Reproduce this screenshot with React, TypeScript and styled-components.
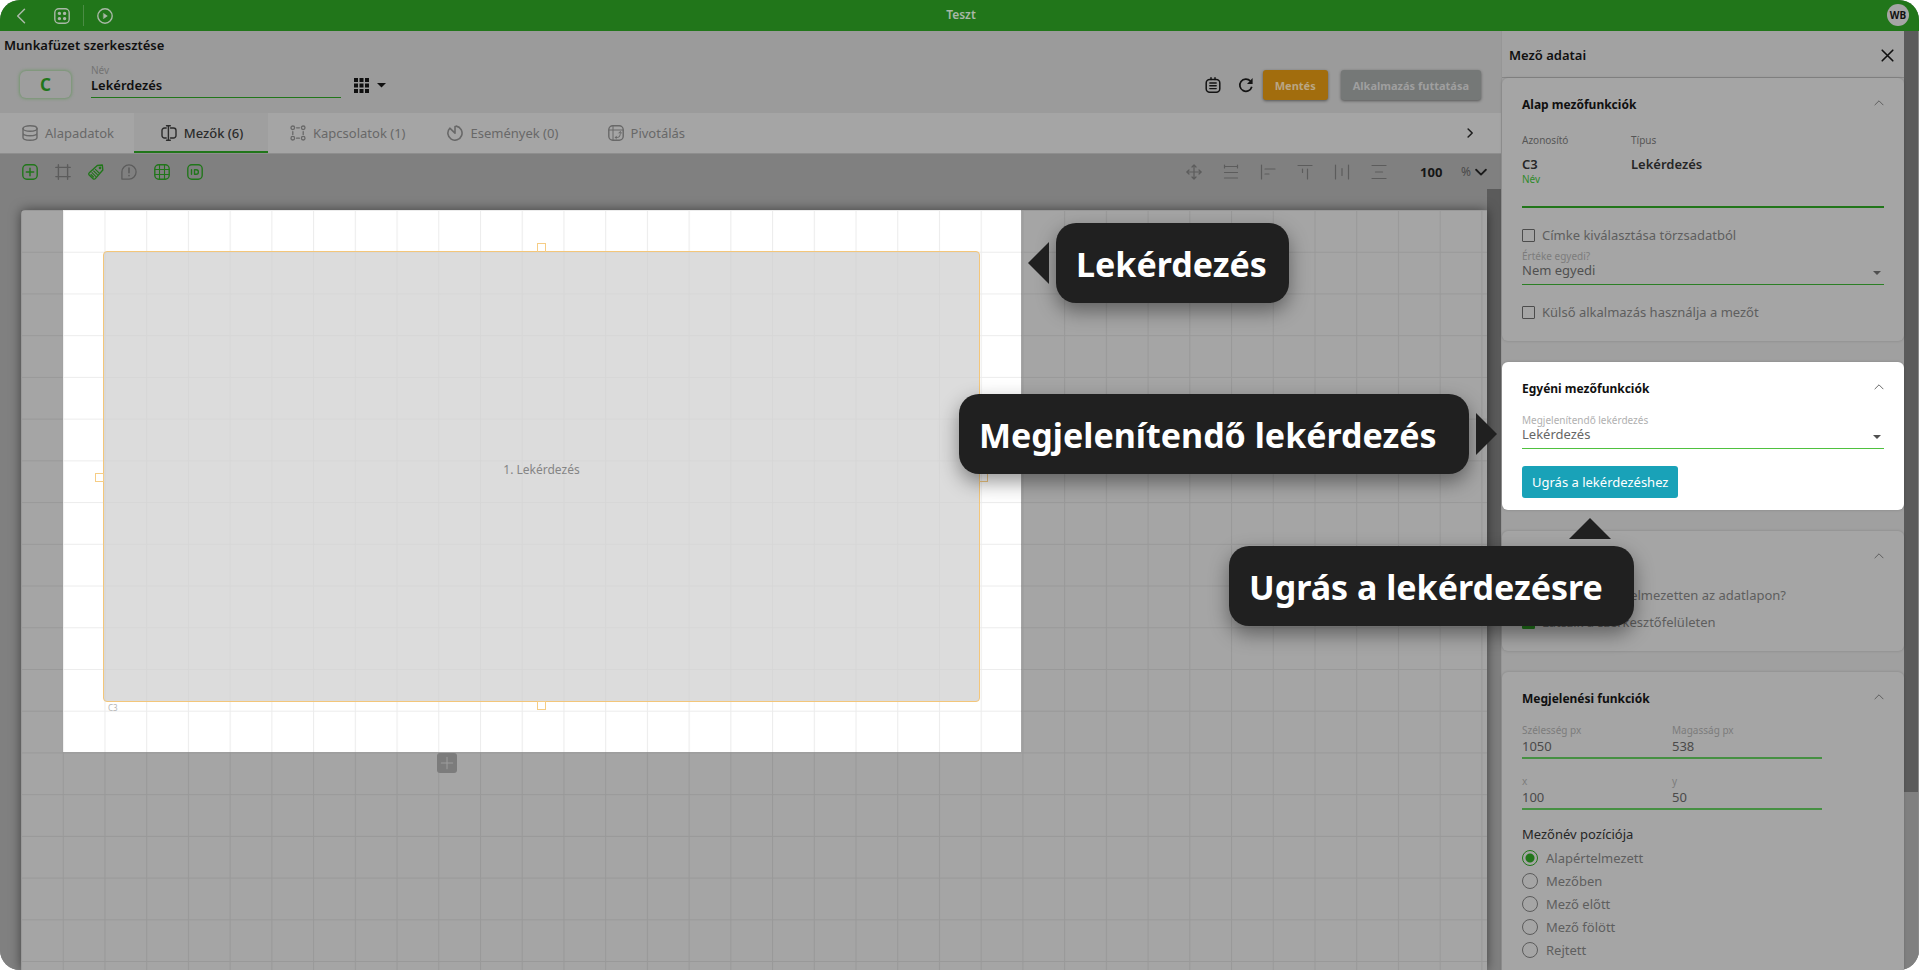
import React from "react";
import styled, { createGlobalStyle, css } from "styled-components";

const c = {
  green: "#21761a",
  greenSoft: "#469043",
  ink: "#101010",
  muted: "#737373",
  head: "#9b9b9b",
  panel: "#a0a0a0",
  card: "#a5a5a5",
  track: "#808080",
  thumb: "#5b5b5b",
  tip: "#202020",
};

const Global = createGlobalStyle`
  *, *::before, *::after { box-sizing: border-box; }
  body { margin: 0; background: #fff; }
  body, button, input, select { font-family: "Noto Sans", "Open Sans", sans-serif; }
  button { border: 0; padding: 0; background: none; cursor: pointer; color: inherit; }
  h1, h2, h3, p, fieldset { margin: 0; padding: 0; border: 0; font-weight: inherit; font-size: inherit; }
  svg { display: block; flex: none; }
`;

const Page = styled.div`
  display: flex;
  flex-direction: column;
  height: 100vh;
  overflow: hidden;
  border-radius: 20px;
  background: ${c.track};
`;

const TopBar = styled.header`
  display: grid;
  grid-template-columns: 1fr auto 1fr;
  align-items: center;
  flex: none;
  height: 31px;
  padding: 0 10px 0 13px;
  background: ${c.green};
  color: #a9b8a7;
`;
const TopLeft = styled.div`
  display: flex;
  align-items: center;
  gap: 25px;
`;
const TopGroup = styled.div`
  display: flex;
  align-items: center;
  gap: 13px;
`;
const Divider = styled.span`
  width: 1px;
  height: 21px;
  background: #4b8c45;
`;
const AppTitle = styled.h1`
  font-size: 12px;
  line-height: 28px;
  height: 30px;
  font-weight: 600;
`;
const Avatar = styled.button`
  justify-self: end;
  width: 22px;
  height: 22px;
  margin-bottom: 2px;
  border-radius: 50%;
  background: #a5a5a5;
  color: ${c.ink};
  font-size: 10px;
  font-weight: 700;
`;

const Body = styled.div`
  display: flex;
  flex: 1;
  min-height: 0;
`;
const Main = styled.main`
  display: flex;
  flex-direction: column;
  flex: 1;
  min-width: 0;
`;
const EditorHead = styled.section`
  background: ${c.head};
`;
const EditorTitle = styled.h2`
  padding-left: 4px;
  font-size: 13px;
  line-height: 28px;
  height: 26px;
  font-weight: 600;
  color: ${c.ink};
`;
const HeadRow = styled.div`
  display: flex;
  height: 56px;
  padding: 7px 20px 13px;
`;
const Badge = styled.div`
  align-self: flex-end;
  width: 51px;
  margin: 0 20px 2px 0;
  border-radius: 6px;
  box-shadow: 0 0 3px 1px #74966f;
  background: #9e9e9e;
  color: ${c.green};
  font-size: 17px;
  line-height: 27px;
  font-weight: 700;
  text-align: center;
`;
const NameField = styled.label`
  display: flex;
  flex-direction: column;
  width: 250px;
  font-size: 10px;
  line-height: 12px;
  color: ${c.muted};
`;
const NameInput = styled.input`
  width: 100%;
  height: 22px;
  padding: 0 0 4px;
  border: 0;
  border-bottom: 1px solid ${c.green};
  background: none;
  color: ${c.ink};
  font-size: 13px;
  font-weight: 600;
`;
const LayoutPicker = styled.button`
  display: flex;
  align-items: center;
  align-self: flex-end;
  gap: 8px;
  height: 30px;
  margin-left: 13px;
  color: ${c.ink};
`;
const Actions = styled.div`
  display: flex;
  align-items: center;
  align-self: flex-end;
  margin-left: auto;
  color: #141414;
`;
const IconButton = styled.button<{ $gap?: number }>`
  display: flex;
  margin-right: ${(p) => p.$gap ?? 0}px;
`;
const ActionButton = styled.button<{ $tone: "save" | "run" }>`
  height: 30px;
  padding: 0 12px;
  border-radius: 3px;
  box-shadow: 0 1px 3px rgba(0, 0, 0, 0.45);
  font-size: 11px;
  font-weight: 700;
  white-space: nowrap;
  ${(p) =>
    p.$tone === "save"
      ? css`
          margin-right: 13px;
          background: #a26d0d;
          color: #b9a685;
        `
      : css`
          background: #757877;
          color: #9f9f9f;
        `}
`;

const Tabs = styled.nav`
  display: flex;
  align-items: stretch;
  flex: none;
  height: 41px;
  background: ${c.card};
  border-bottom: 1px solid #8e8e8e;
`;
const Tab = styled.button<{ $active?: boolean }>`
  display: flex;
  align-items: center;
  justify-content: center;
  gap: 7px;
  min-width: 134px;
  padding: 0 20px 0 22px;
  font-size: 13px;
  color: ${(p) => (p.$active ? "#2b2b2b" : "#686868")};
  font-weight: ${(p) => (p.$active ? 500 : 400)};
  background: ${(p) => (p.$active ? "#9f9f9f" : "none")};
  box-shadow: ${(p) => (p.$active ? `inset 0 -2px ${c.green}` : "none")};
`;
const TabsNext = styled.button`
  margin-left: auto;
  padding: 0 26px;
  color: #1d1d1d;
`;

const Toolbar = styled.div`
  display: flex;
  align-items: center;
  flex: none;
  height: 35px;
  padding: 0 14px 0 22px;
  background: ${c.track};
`;
const Tools = styled.div<{ $end?: boolean }>`
  display: flex;
  align-items: center;
  gap: ${(p) => (p.$end ? 21 : 17)}px;
  margin-left: ${(p) => (p.$end ? "auto" : 0)};
  color: #585858;
`;
const Tool = styled.button<{ $on?: boolean }>`
  display: flex;
  color: ${(p) => (p.$on ? c.green : "#5c5c5c")};
`;
const ZoomBox = styled.label`
  display: flex;
  align-items: center;
  margin-left: 33px;
  font-size: 12px;
  color: #4a4a4a;
`;
const ZoomInput = styled.input`
  width: 41px;
  padding: 0;
  border: 0;
  background: none;
  color: #161616;
  font-size: 13px;
  font-weight: 700;
`;
const ZoomChevron = styled.button`
  display: flex;
  margin-left: 4px;
  color: #1a1a1a;
`;

const Workspace = styled.div`
  display: flex;
  flex: 1;
  min-height: 0;
`;
const Viewport = styled.div`
  flex: 1;
  min-width: 0;
  padding: 21px 0 0 21px;
  background: ${c.track};
`;
const Sheet = styled.div`
  position: relative;
  height: 100%;
  border-radius: 4px 0 0 0;
  background: ${c.card};
  box-shadow: 0 0 12px rgba(0, 0, 0, 0.5);
`;
const Spotlight = styled.div`
  position: absolute;
  left: 42px;
  top: 0;
  width: 958px;
  height: 542px;
  background: #fff;
`;
const GridLines = styled.svg`
  position: absolute;
  inset: 0;
  width: 100%;
  height: 100%;
`;
const FieldBox = styled.div`
  position: absolute;
  left: 82px;
  top: 41px;
  width: 877px;
  height: 451px;
  display: flex;
  align-items: center;
  justify-content: center;
  padding-bottom: 14px;
  border: 1px solid #f3c67a;
  border-radius: 4px;
  background: rgba(205, 205, 205, 0.7);
  font-size: 12px;
  color: #858585;
`;
const Handle = styled.span<{ $side: "top" | "right" | "bottom" | "left" }>`
  position: absolute;
  width: 9px;
  height: 9px;
  border: 1px solid #f6cd85;
  ${(p) =>
    ({
      top: css`
        top: -9px;
        left: 50%;
        margin-left: -5px;
        border-bottom: 0;
      `,
      bottom: css`
        bottom: -9px;
        left: 50%;
        margin-left: -5px;
      `,
      left: css`
        left: -9px;
        top: 50%;
        margin-top: -4px;
      `,
      right: css`
        right: -9px;
        top: 50%;
        margin-top: -4px;
      `,
    })[p.$side]}
`;
const FieldId = styled.span`
  position: absolute;
  left: 4px;
  top: 451px;
  font-size: 8px;
  line-height: 10px;
  color: #b5b5b5;
`;
const AddRow = styled.button`
  position: absolute;
  left: 416px;
  top: 543px;
  width: 20px;
  height: 20px;
  display: flex;
  align-items: center;
  justify-content: center;
  border-radius: 3px;
  background: #7c7c7c;
  color: #9c9c9c;
`;
const ScrollTrack = styled.div<{ $edge?: boolean }>`
  flex: none;
  width: ${(p) => (p.$edge ? 15 : 14)}px;
  border-right: ${(p) => (p.$edge ? "1px solid #8a8a8a" : "0")};
  background: ${c.track};
`;
const ScrollThumb = styled.div<{ $h: number }>`
  height: ${(p) => p.$h}%;
  background: ${c.thumb};
`;

const Side = styled.aside`
  flex: none;
  width: 403px;
  background: ${c.panel};
  border-left: 1px solid #969696;
`;
const SideHead = styled.div`
  display: flex;
  align-items: center;
  justify-content: space-between;
  height: 47px;
  padding: 2px 10px 0 7px;
  border-bottom: 1px solid #888;
  background: #a2a2a2;
  color: ${c.ink};
  font-size: 13px;
  font-weight: 600;
`;
const Cards = styled.div`
  display: flex;
  flex-direction: column;
  gap: 21px;
`;
const Card = styled.section<{ $lit?: boolean; $bottom?: number }>`
  position: relative;
  padding: 0 20px ${(p) => p.$bottom ?? 19}px;
  border-radius: 6px;
  background: ${(p) => (p.$lit ? "#fff" : c.card)};
  box-shadow: 0 0 3px rgba(0, 0, 0, 0.18);
  --label: ${(p) => (p.$lit ? "#b0b0b0" : "#7c7c7c")};
`;
const CardHead = styled.div`
  display: flex;
  align-items: center;
  justify-content: space-between;
  height: 50px;
  padding: 3px 0 0;
  font-size: 12px;
  font-weight: 700;
  color: ${c.ink};
`;
const HeadChevron = styled.button`
  margin-left: auto;
  padding: 0 0 4px;
  color: #555;
`;
const Facts = styled.dl`
  display: grid;
  grid-template-columns: 109px 1fr;
  margin: 0;
  padding-top: 4px;
`;
const Fact = styled.div`
  dt {
    font-size: 10px;
    line-height: 16px;
    color: #565656;
  }
  dd {
    margin: 7px 0 0;
    font-size: 13px;
    line-height: 18px;
    font-weight: 600;
    color: #262626;
  }
`;
const Field = styled.label<{ $accent?: boolean }>`
  position: relative;
  display: block;
  font-size: 10px;
  line-height: ${(p) => (p.$accent ? 12 : 16)}px;
  color: ${(p) => (p.$accent ? "#2f8a2a" : "var(--label)")};
`;
const Input = styled.input<{ $accent?: boolean }>`
  display: block;
  width: 100%;
  height: ${(p) => (p.$accent ? 23 : 21)}px;
  padding: 0 0 3px;
  border: 0;
  border-bottom: ${(p) => (p.$accent ? `2px solid ${c.green}` : `2px solid ${c.greenSoft}`)};
  border-radius: 0;
  background: none;
  color: #4a4a4a;
  font-size: 13px;
`;
const Select = styled.select<{ $lit?: boolean }>`
  appearance: none;
  display: block;
  width: 100%;
  height: 25px;
  margin-top: -4px;
  padding: 0 20px 4px 0;
  border: 0;
  border-bottom: 1px solid ${(p) => (p.$lit ? "#4fc13f" : "#2b7f25")};
  border-radius: 0;
  background: none;
  color: ${(p) => (p.$lit ? "#666" : "#505050")};
  font-size: 13px;
`;
const SelectCaret = styled.span`
  position: absolute;
  right: 3px;
  bottom: 10px;
  border: 4px solid transparent;
  border-top-color: #505050;
  border-bottom: 0;
`;
const CheckRow = styled.label<{ $top: number; $bottom?: number }>`
  display: flex;
  align-items: center;
  gap: 7px;
  height: 20px;
  margin: ${(p) => p.$top}px 0 ${(p) => p.$bottom ?? 0}px;
  font-size: 13px;
  color: #5e5e5e;
`;
const Check = styled.input`
  appearance: none;
  width: 13px;
  height: 13px;
  margin: 0;
  border: 1px solid #4c4c4c;
  border-radius: 1px;
  &:checked {
    border-color: ${c.green};
    background: ${c.green};
  }
`;
const JumpButton = styled.button`
  height: 32px;
  margin-top: 17px;
  padding: 0 10px;
  border-radius: 3px;
  background: #19a2b8;
  color: #fff;
  font-size: 13px;
`;
const Pair = styled.div`
  display: grid;
  grid-template-columns: 150px 150px;
  margin-bottom: 14px;
`;
const Radios = styled.fieldset``;
const Legend = styled.legend`
  padding: 0;
  margin-bottom: 2px;
  font-size: 13px;
  line-height: 20px;
  color: #262626;
`;
const RadioRow = styled.label`
  display: flex;
  align-items: center;
  gap: 8px;
  height: 23px;
  font-size: 13px;
  color: #5e5e5e;
`;
const Radio = styled.input`
  appearance: none;
  width: 16px;
  height: 16px;
  margin: 0;
  border: 1px solid #5c5c5c;
  border-radius: 50%;
  &:checked {
    border-color: ${c.green};
    background: radial-gradient(circle, ${c.green} 4px, transparent 5px);
  }
`;

const Tip = styled.div<{ $w: number }>`
  position: absolute;
  z-index: 5;
  width: ${(p) => p.$w}px;
  height: 80px;
  padding: 0 20px;
  border-radius: 20px;
  background: ${c.tip};
  box-shadow: 0 8px 20px rgba(0, 0, 0, 0.42);
  color: #fff;
  font-size: 34px;
  line-height: 82px;
  font-weight: 700;
  white-space: nowrap;
  &::after {
    content: "";
    position: absolute;
    border: 21px solid transparent;
  }
`;
const TipRight = styled(Tip)`
  left: 1035px;
  top: 13px;
  &::after {
    top: 19px;
    right: calc(100% + 7px);
    border-left: 0;
    border-right-color: ${c.tip};
  }
`;
const TipLeft = styled(Tip)`
  right: calc(100% + 33px);
  top: 32px;
  &::after {
    top: 19px;
    left: calc(100% + 7px);
    border-right: 0;
    border-left-color: ${c.tip};
  }
`;
const TipBelow = styled(Tip)`
  right: 270px;
  top: 184px;
  &::after {
    bottom: calc(100% + 7px);
    right: 23px;
    border-top: 0;
    border-bottom-color: ${c.tip};
  }
`;

type SvgProps = { size?: number; w?: number; children: React.ReactNode };
const Svg = ({ size = 16, w = 1.4, children }: SvgProps) => (
  <svg width={size} height={size} viewBox="0 0 16 16" fill="none" stroke="currentColor" strokeWidth={w} strokeLinecap="round" strokeLinejoin="round" aria-hidden="true">
    {children}
  </svg>
);
const Frame = () => <rect x="0.8" y="0.8" width="14.4" height="14.4" rx="4" />;

const BackIcon = () => <Svg w={1.5}><path d="M11.5 1.2 4.7 8l6.8 6.8" /></Svg>;
const AppsIcon = () => (
  <Svg>
    <Frame />
    {[5.4, 10.6].map((x) => [5.4, 10.6].map((y) => <circle key={`${x}-${y}`} cx={x} cy={y} r="1" fill="currentColor" />))}
  </Svg>
);
const PlayIcon = () => <Svg><circle cx="8" cy="8" r="7.2" /><path d="m6.7 5.6 3.6 2.4-3.6 2.4z" fill="currentColor" strokeWidth="0.6" /></Svg>;
const TilesIcon = () => (
  <svg width="15" height="15" viewBox="0 0 15 15" fill="currentColor" aria-hidden="true">
    {[0, 5.5, 11].map((x) => [0, 5.5, 11].map((y) => <rect key={`${x}-${y}`} x={x} y={y} width="4" height="4" />))}
  </svg>
);
const CaretIcon = () => <svg width="9" height="5" viewBox="0 0 9 5" fill="currentColor" aria-hidden="true"><path d="M0 0h9L4.5 4.5z" /></svg>;
const ClipboardIcon = () => (
  <Svg w={1.5}><rect x="1.2" y="2.4" width="13.6" height="12.8" rx="3.5" /><path d="M4.8 6h6.4M4.8 8.8h6.4M4.8 11.6h6.4" strokeWidth="1.4" /><path d="M6 0.8v1.6M10 0.8v1.6" /></Svg>
);
const RefreshIcon = () => <Svg w={1.7}><path d="M12.4 4A6.1 6.1 0 1 0 13.8 9.8" strokeLinecap="butt" /><path d="M14.6 1v6H9z" fill="currentColor" stroke="none" /></Svg>;
const DatabaseIcon = () => <Svg><ellipse cx="8" cy="3.5" rx="7" ry="2.7" /><path d="M1 3.5v9c0 1.5 3.1 2.7 7 2.7s7-1.2 7-2.7v-9M1 8c0 1.5 3.1 2.7 7 2.7s7-1.2 7-2.7" /></Svg>;
const FieldsIcon = () => <Svg><path d="M5.2 3H3.5A2.5 2.5 0 0 0 1 5.5v5A2.5 2.5 0 0 0 3.5 13h1.7M9.5 3h3A2.5 2.5 0 0 1 15 5.5v5a2.5 2.5 0 0 1-2.5 2.5h-3M7.4 1v14M5.5 0.8h3.8M5.5 15.2h3.8" /></Svg>;
const LinksIcon = () => (
  <Svg w={1.3}>
    {[[2.8, 2.8], [13.2, 2.8], [2.8, 13.2], [13.2, 13.2]].map(([x, y]) => <circle key={`${x}-${y}`} cx={x} cy={y} r="1.8" />)}
    <path d="M6.6 2.8h2.8M2.8 6.6v2.8M13.2 6.6v2.8M6.6 13.2h2.8" />
  </Svg>
);
const EventsIcon = () => <Svg w={1.6}><path d="M9.2 1.1A7.1 7.1 0 1 1 2.8 3.2L8 8.2V1.5" /></Svg>;
const PivotIcon = () => <Svg w={1.4}><Frame /><path d="M1 5h14M5 1v14M12.2 7v2.5a3 3 0 0 1-3 3H7.5M10.8 8l1.4-1.4L13.6 8M8.5 11.2l-1.3 1.3 1.3 1.3" strokeWidth="1" /></Svg>;
const ChevronIcon = ({ d }: { d: "up" | "down" | "right" }) => (
  <Svg size={d === "down" ? 12 : 10} w={d === "up" ? 1.4 : 2.4}>
    <path d={{ up: "M1.5 11 8 4.5l6.5 6.5", down: "M1.5 5 8 11.5 14.5 5", right: "M5 1.5 11.5 8 5 14.5" }[d]} />
  </Svg>
);
const CloseIcon = () => <Svg size={13} w={2}><path d="m1.5 1.5 13 13M14.5 1.5l-13 13" /></Svg>;
const PlusIcon = () => <Svg size={14} w={1.2}><path d="M8 1.5v13M1.5 8h13" /></Svg>;
const AddFieldIcon = () => <Svg><Frame /><path d="M8 4.3v7.4M4.3 8h7.4" strokeWidth="1.5" /></Svg>;
const CropIcon = () => <Svg><path d="M3.4 0.8v14.4M12.6 0.8v14.4M0.8 3.4h14.4M0.8 12.6h14.4" /></Svg>;
const TagIcon = () => <Svg><path d="M9.3 1.5 14.3 1l.5 5-7.5 8.6a1.5 1.5 0 0 1-2.2.1L1.2 11a1.5 1.5 0 0 1 .1-2.200z" /><path d="m4 8.7 3.7 3.7M5.7 7l3.7 3.7M7.4 5.3l3.7 3.7M3 10.5l2.5 2.5" strokeWidth="1.1" /><circle cx="12" cy="3.9" r=".6" /></Svg>;
const AlertIcon = () => <Svg w={1.3}><path d="M0.9 15.1V8A7.1 7.1 0 1 1 8 15.1z" /><path d="M8 4v4.8M8 11.6v.2" strokeWidth="1.6" /></Svg>;
const GridIcon = () => <Svg><Frame /><path d="M5.5 1v14M10.5 1v14M1 5.5h14M1 10.5h14" strokeWidth="1.1" /></Svg>;
const IdIcon = () => <Svg><Frame /><path d="M4.5 5.8v4.4M7.5 5.8v4.4h1.7a2.2 2.2 0 0 0 0-4.4z" /></Svg>;
const MoveIcon = () => <Svg w={1.2}><path d="M8 1v14M1 8h14M6 3l2-2.2L10 3M6 13l2 2.2L10 13M3 6 .8 8 3 10M13 6l2.2 2L13 10" /></Svg>;
const WidthIcon = () => <Svg w={1.2}><path d="M1.5 2.5h13M1.5 1v3M14.5 1v3M1.5 8.5h13M1.5 14h13" /></Svg>;
const AlignLeftIcon = () => <Svg w={1.2}><path d="M1.5 1v14M5 5h10M5 10h4" /></Svg>;
const AlignTopIcon = () => <Svg w={1.2}><path d="M1 1.5h14M5.5 5v3.5M10.5 5v10" /></Svg>;
const DistributeHIcon = () => <Svg w={1.2}><path d="M1.5 1v14M14.5 1v14M8 4.5v7" /></Svg>;
const DistributeVIcon = () => <Svg w={1.2}><path d="M1 1.5h14M1 14.5h14M4.5 8h7" /></Svg>;

const tabs = [
  { label: "Alapadatok", icon: <DatabaseIcon /> },
  { label: "Mezők (6)", icon: <FieldsIcon />, active: true },
  { label: "Kapcsolatok (1)", icon: <LinksIcon /> },
  { label: "Események (0)", icon: <EventsIcon /> },
  { label: "Pivotálás", icon: <PivotIcon /> },
];
const leftTools = [
  { name: "Új mező", icon: <AddFieldIcon />, on: true },
  { name: "Keret", icon: <CropIcon /> },
  { name: "Címkék", icon: <TagIcon />, on: true },
  { name: "Figyelmeztetések", icon: <AlertIcon /> },
  { name: "Rács", icon: <GridIcon />, on: true },
  { name: "Azonosítók", icon: <IdIcon />, on: true },
];
const rightTools = [
  { name: "Mozgatás", icon: <MoveIcon /> },
  { name: "Szélesség", icon: <WidthIcon /> },
  { name: "Balra igazítás", icon: <AlignLeftIcon /> },
  { name: "Felülre igazítás", icon: <AlignTopIcon /> },
  { name: "Vízszintes elosztás", icon: <DistributeHIcon /> },
  { name: "Függőleges elosztás", icon: <DistributeVIcon /> },
];
const positions = ["Alapértelmezett", "Mezőben", "Mező előtt", "Mező fölött", "Rejtett"];

const SectionHead = ({ title }: { title?: string }) => (
  <CardHead>
    {title && <h3>{title}</h3>}
    <HeadChevron aria-label="Összecsukás"><ChevronIcon d="up" /></HeadChevron>
  </CardHead>
);

export default function App() {
  return (
    <>
      <Global />
      <Page>
        <TopBar>
          <TopLeft>
            <IconButton aria-label="Vissza"><BackIcon /></IconButton>
            <TopGroup>
              <IconButton aria-label="Alkalmazások"><AppsIcon /></IconButton>
              <Divider />
              <IconButton aria-label="Indítás"><PlayIcon /></IconButton>
            </TopGroup>
          </TopLeft>
          <AppTitle>Teszt</AppTitle>
          <Avatar>WB</Avatar>
        </TopBar>
        <Body>
          <Main>
            <EditorHead>
              <EditorTitle>Munkafüzet szerkesztése</EditorTitle>
              <HeadRow>
                <Badge>C</Badge>
                <NameField>
                  Név
                  <NameInput defaultValue="Lekérdezés" />
                </NameField>
                <LayoutPicker aria-label="Elrendezés"><TilesIcon /><CaretIcon /></LayoutPicker>
                <Actions>
                  <IconButton $gap={17} aria-label="Napló"><ClipboardIcon /></IconButton>
                  <IconButton $gap={9} aria-label="Frissítés"><RefreshIcon /></IconButton>
                  <ActionButton $tone="save">Mentés</ActionButton>
                  <ActionButton $tone="run">Alkalmazás futtatása</ActionButton>
                </Actions>
              </HeadRow>
            </EditorHead>
            <Tabs>
              {tabs.map((t) => (
                <Tab key={t.label} $active={t.active}>{t.icon}<span>{t.label}</span></Tab>
              ))}
              <TabsNext aria-label="Következő"><ChevronIcon d="right" /></TabsNext>
            </Tabs>
            <Toolbar>
              <Tools>
                {leftTools.map((t) => <Tool key={t.name} $on={t.on} aria-label={t.name}>{t.icon}</Tool>)}
              </Tools>
              <Tools $end>
                {rightTools.map((t) => <Tool key={t.name} aria-label={t.name}>{t.icon}</Tool>)}
              </Tools>
              <ZoomBox>
                <ZoomInput defaultValue="100" aria-label="Nagyítás" />
                <span>%</span>
              </ZoomBox>
              <ZoomChevron aria-label="Nagyítás választása"><ChevronIcon d="down" /></ZoomChevron>
            </Toolbar>
            <Workspace>
              <Viewport>
                <Sheet>
                  <Spotlight />
                  <GridLines aria-hidden="true">
                    <defs>
                      <pattern id="cells" width="50" height="50" patternUnits="userSpaceOnUse" patternTransform="scale(0.8345)">
                        <path d="M0 0.6H50M0.6 0V50" stroke="#000" strokeOpacity="0.075" strokeWidth="1.2" />
                      </pattern>
                    </defs>
                    <rect width="100%" height="100%" fill="url(#cells)" />
                  </GridLines>
                  <FieldBox>
                    1. Lekérdezés
                    <Handle $side="top" />
                    <Handle $side="right" />
                    <Handle $side="bottom" />
                    <Handle $side="left" />
                    <FieldId>C3</FieldId>
                  </FieldBox>
                  <AddRow aria-label="Sor hozzáadása"><PlusIcon /></AddRow>
                  <TipRight $w={233}>Lekérdezés</TipRight>
                </Sheet>
              </Viewport>
              <ScrollTrack><ScrollThumb $h={53} /></ScrollTrack>
            </Workspace>
          </Main>
          <Side>
            <SideHead>
              <h2>Mező adatai</h2>
              <IconButton aria-label="Bezárás"><CloseIcon /></IconButton>
            </SideHead>
            <Cards>
              <Card>
                <SectionHead title="Alap mezőfunkciók" />
                <Facts>
                  <Fact><dt>Azonosító</dt><dd>C3</dd></Fact>
                  <Fact><dt>Típus</dt><dd>Lekérdezés</dd></Fact>
                </Facts>
                <Field $accent>
                  Név
                  <Input $accent />
                </Field>
                <CheckRow $top={17} $bottom={3}><Check type="checkbox" />Címke kiválasztása törzsadatból</CheckRow>
                <Field>
                  Értéke egyedi?
                  <Select><option>Nem egyedi</option></Select>
                  <SelectCaret />
                </Field>
                <CheckRow $top={17}><Check type="checkbox" />Külső alkalmazás használja a mezőt</CheckRow>
              </Card>
              <Card $lit $bottom={12}>
                <SectionHead title="Egyéni mezőfunkciók" />
                <Field>
                  Megjelenítendő lekérdezés
                  <Select $lit><option>Lekérdezés</option></Select>
                  <SelectCaret />
                </Field>
                <JumpButton>Ugrás a lekérdezéshez</JumpButton>
                <TipLeft $w={510}>Megjelenítendő lekérdezés</TipLeft>
                <TipBelow $w={405}>Ugrás a lekérdezésre</TipBelow>
              </Card>
              <Card>
                <SectionHead />
                <CheckRow $top={4}><Check type="checkbox" />Látszik alapértelmezetten az adatlapon?</CheckRow>
                <CheckRow $top={7}><Check type="checkbox" defaultChecked />Látszik a szerkesztőfelületen</CheckRow>
              </Card>
              <Card>
                <SectionHead title="Megjelenési funkciók" />
                <Pair>
                  <Field>Szélesség px<Input defaultValue="1050" /></Field>
                  <Field>Magasság px<Input defaultValue="538" /></Field>
                </Pair>
                <Pair>
                  <Field>x<Input defaultValue="100" /></Field>
                  <Field>y<Input defaultValue="50" /></Field>
                </Pair>
                <Radios>
                  <Legend>Mezőnév pozíciója</Legend>
                  {positions.map((p, i) => (
                    <RadioRow key={p}><Radio type="radio" name="position" defaultChecked={i === 0} />{p}</RadioRow>
                  ))}
                </Radios>
              </Card>
            </Cards>
          </Side>
          <ScrollTrack $edge><ScrollThumb $h={81} /></ScrollTrack>
        </Body>
      </Page>
    </>
  );
}
